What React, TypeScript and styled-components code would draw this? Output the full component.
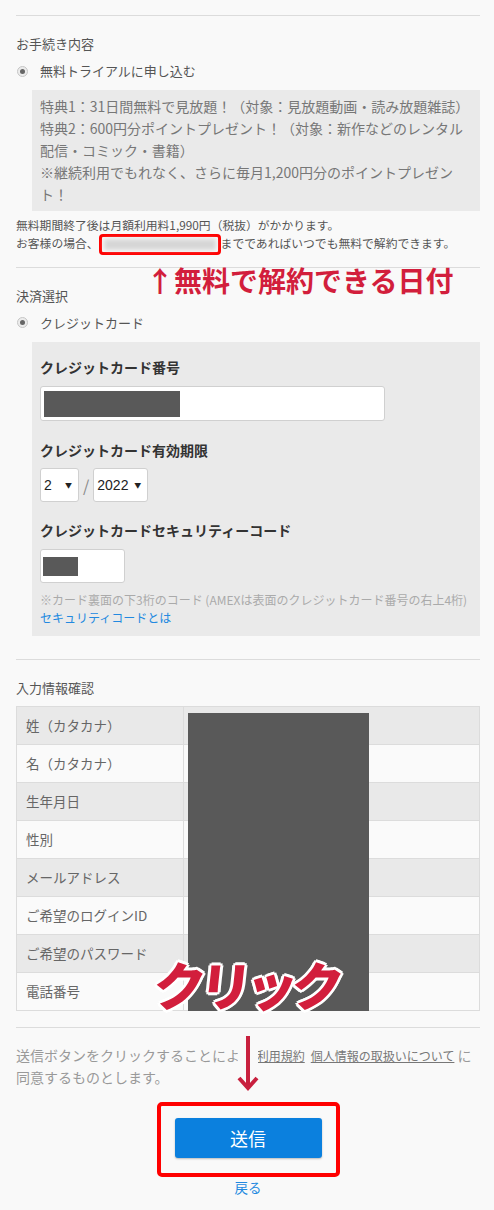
import styled, { createGlobalStyle } from "styled-components";

const GlobalStyle = createGlobalStyle`
  html, body {
    margin: 0;
    padding: 0;
    background: #f9f9f9;
  }
  body {
    font-family: "Noto Sans CJK JP", "Noto Sans", sans-serif;
    color: #555;
  }
  * {
    box-sizing: border-box;
  }
`;

const Page = styled.div`
  padding: 15px 14px 14px 16px;
`;

const Divider = styled.hr<{ $top?: number }>`
  margin: ${(p) => p.$top ?? 0}px 0 0;
  border: 0;
  border-top: 1px solid #dcdcdc;
`;

const Section = styled.section`
  padding-top: 18px;
`;

const SectionTitle = styled.h2`
  margin: 0;
  font-size: 13px;
  font-weight: 400;
  line-height: 20px;
  color: #555;
`;

const RadioRow = styled.label`
  display: flex;
  align-items: center;
  gap: 12px;
  margin-top: 7px;
  padding-left: 1px;
  font-size: 13px;
  line-height: 20px;
  color: #555;
`;

const RadioDot = styled.span`
  width: 11px;
  height: 11px;
  border-radius: 50%;
  border: 1px solid #c6c6c6;
  background: #ececec;
  display: grid;
  place-items: center;
  &::after {
    content: "";
    width: 5px;
    height: 5px;
    border-radius: 50%;
    background: #666;
  }
`;

const Panel = styled.div<{ $pad: string }>`
  margin: 9px 0 0 16px;
  background: #eaeaea;
  padding: ${(p) => p.$pad};
`;

const Benefits = styled.p`
  margin: 0;
  font-size: 14px;
  line-height: 22px;
  color: #777;
  white-space: nowrap;
`;

const Notes = styled.div`
  position: relative;
  margin-top: 5px;
  font-size: 11.8px;
  line-height: 18px;
  color: #555;
  white-space: nowrap;
`;

const DateMask = styled.span`
  display: inline-block;
  vertical-align: middle;
  width: 122px;
  height: 21px;
  margin: -3px 0 -2px;
  border: 3px solid #ff0000;
  border-radius: 4px;
  padding: 2px;
  background: #f9f9f9;
  &::after {
    content: "";
    display: block;
    height: 100%;
    background: #d6d6d6;
    filter: blur(2px);
  }
`;

const Callout = styled.div`
  position: absolute;
  left: 130px;
  top: 47px;
  font-size: 28px;
  font-weight: 700;
  line-height: 34px;
  color: #d21e3c;
  white-space: nowrap;
`;

const FieldLabel = styled.div<{ $top?: number }>`
  margin-top: ${(p) => p.$top ?? 0}px;
  font-size: 14px;
  font-weight: 700;
  line-height: 20px;
  color: #333;
`;

const Field = styled.div<{ $w: number; $h: number; $pad: string }>`
  margin-top: 9px;
  width: ${(p) => p.$w}px;
  height: ${(p) => p.$h}px;
  padding: ${(p) => p.$pad};
  background: #fff;
  border: 1px solid #d0d0d0;
  border-radius: 3px;
`;

const Redacted = styled.div<{ $w: number }>`
  width: ${(p) => p.$w}px;
  height: 100%;
  background: #595959;
`;

const ExpiryRow = styled.div`
  margin-top: 8px;
  display: flex;
  align-items: center;
  gap: 4px;
  color: #888;
  font-size: 16px;
`;

const SelectWrap = styled.div<{ $w: number }>`
  position: relative;
  width: ${(p) => p.$w}px;
  &::after {
    content: "▼";
    position: absolute;
    right: 7px;
    top: 50%;
    transform: translateY(-50%);
    font-size: 7px;
    color: #222;
    pointer-events: none;
  }
`;

const Select = styled.select`
  appearance: none;
  width: 100%;
  height: 34px;
  padding: 0 0 0 3px;
  background: #fff;
  border: 1px solid #d0d0d0;
  border-radius: 3px;
  font-family: "Liberation Sans", Arial, sans-serif;
  font-size: 14px;
  color: #222;
`;

const Hint = styled.div`
  margin-top: 8px;
  font-size: 12px;
  line-height: 18px;
  color: #aaa;
  white-space: nowrap;
`;

const BlueLink = styled.a<{ $size?: number }>`
  display: block;
  font-size: ${(p) => p.$size ?? 12}px;
  line-height: 18px;
  color: #2289e0;
  text-decoration: none;
`;

const TableWrap = styled.div`
  position: relative;
  margin-top: 8px;
`;

const InfoTable = styled.table`
  width: 100%;
  border-collapse: collapse;
  border: 1px solid #dcdcdc;
`;

const Row = styled.tr`
  height: 38px;
  background: #fafafa;
  &:nth-child(odd) {
    background: #e9e9e9;
  }
`;

const LabelCell = styled.td`
  width: 167px;
  padding: 0 0 0 9px;
  border: 1px solid #dcdcdc;
  font-size: 13.5px;
  color: #666;
`;

const ValueCell = styled.td`
  border: 1px solid #dcdcdc;
`;

const ValueMask = styled.div`
  position: absolute;
  left: 172px;
  top: 7px;
  width: 181px;
  bottom: 0;
  background: #595959;
`;

const ClickCallout = styled.div`
  position: absolute;
  left: 138px;
  top: 248px;
  font-size: 52px;
  font-weight: 900;
  line-height: 60px;
  letter-spacing: -6px;
  color: #d21e3c;
  transform: skewX(-6deg);
  text-shadow: 3px 0 #fff, -3px 0 #fff, 0 3px #fff, 0 -3px #fff, 2px 2px #fff,
    -2px -2px #fff, 2px -2px #fff, -2px 2px #fff;
  white-space: nowrap;
`;

const Terms = styled.p`
  position: relative;
  margin: 16px 0 0;
  font-size: 14px;
  line-height: 22px;
  color: #999;
  white-space: nowrap;
`;

const TermsLink = styled.a`
  margin: 0 3px;
  font-size: 12px;
  line-height: 1;
  color: #777;
  text-decoration: underline;
`;

const DownArrow = styled.svg`
  position: absolute;
  left: 219px;
  top: -10px;
`;

const SubmitFrame = styled.div`
  width: fit-content;
  margin: 14px auto 0;
  padding: 12px 14px 15px;
  border: 4px solid #ff0000;
  border-radius: 5px;
`;

const SubmitButton = styled.button`
  width: 147px;
  height: 40px;
  border: 0;
  border-radius: 3px;
  background: #0b80de;
  box-shadow: 0 1px 2px rgba(0, 0, 0, 0.25);
  color: #fff;
  font-family: inherit;
  font-size: 18px;
`;

const Back = styled(BlueLink)`
  margin-top: 1px;
  text-align: center;
`;

const rows = [
  "姓（カタカナ）",
  "名（カタカナ）",
  "生年月日",
  "性別",
  "メールアドレス",
  "ご希望のログインID",
  "ご希望のパスワード",
  "電話番号",
];

export default function App() {
  return (
    <>
      <GlobalStyle />
      <Page>
        <Divider />
        <Section>
          <SectionTitle>お手続き内容</SectionTitle>
          <RadioRow>
            <RadioDot />
            無料トライアルに申し込む
          </RadioRow>
          <Panel $pad="5px 8px 6px">
            <Benefits>
              特典1：31日間無料で見放題！（対象：見放題動画・読み放題雑誌）
              <br />
              特典2：600円分ポイントプレゼント！（対象：新作などのレンタル
              <br />
              配信・コミック・書籍）
              <br />
              ※継続利用でもれなく、さらに毎月1,200円分のポイントプレゼン
              <br />
              ト！
            </Benefits>
          </Panel>
          <Notes>
            無料期間終了後は月額利用料1,990円（税抜）がかかります。
            <br />
            お客様の場合、
            <DateMask />
            までであればいつでも無料で解約できます。
            <Callout>↑無料で解約できる日付</Callout>
          </Notes>
        </Section>

        <Divider $top={14} />
        <Section>
          <SectionTitle>決済選択</SectionTitle>
          <RadioRow>
            <RadioDot />
            クレジットカード
          </RadioRow>
          <Panel $pad="15px 8px 9px">
            <FieldLabel>クレジットカード番号</FieldLabel>
            <Field $w={345} $h={35} $pad="4px 3px 3px">
              <Redacted $w={136} />
            </Field>
            <FieldLabel $top={19}>クレジットカード有効期限</FieldLabel>
            <ExpiryRow>
              <SelectWrap $w={39}>
                <Select defaultValue="2">
                  <option value="2">2</option>
                </Select>
              </SelectWrap>
              /
              <SelectWrap $w={55}>
                <Select defaultValue="2022">
                  <option value="2022">2022</option>
                </Select>
              </SelectWrap>
            </ExpiryRow>
            <FieldLabel $top={18}>クレジットカードセキュリティーコード</FieldLabel>
            <Field $w={85} $h={34} $pad="7px 2px 6px">
              <Redacted $w={35} />
            </Field>
            <Hint>
              ※カード裏面の下3桁のコード (AMEXは表面のクレジットカード番号の右上4桁)
            </Hint>
            <BlueLink href="#">セキュリティコードとは</BlueLink>
          </Panel>
        </Section>

        <Divider $top={23} />
        <Section>
          <SectionTitle>入力情報確認</SectionTitle>
          <TableWrap>
            <InfoTable>
              <tbody>
                {rows.map((label) => (
                  <Row key={label}>
                    <LabelCell>{label}</LabelCell>
                    <ValueCell />
                  </Row>
                ))}
              </tbody>
            </InfoTable>
            <ValueMask />
            <ClickCallout>クリック</ClickCallout>
          </TableWrap>
        </Section>

        <Divider $top={16} />
        <Terms>
          送信ボタンをクリックすることにより
          <TermsLink href="#">利用規約</TermsLink>
          <TermsLink href="#">個人情報の取扱いについて</TermsLink>
          に
          <br />
          同意するものとします。
          <DownArrow width="26" height="58" viewBox="0 0 26 58">
            <rect x="3" y="9" width="20" height="20" fill="#f9f9f9" />
            <path
              d="M13 2 V52 M4 44 L13 54 L22 44"
              fill="none"
              stroke="#c8203e"
              strokeWidth="4"
              strokeLinejoin="miter"
            />
          </DownArrow>
        </Terms>
        <SubmitFrame>
          <SubmitButton>送信</SubmitButton>
        </SubmitFrame>
        <Back href="#" $size={13.5}>
          戻る
        </Back>
      </Page>
    </>
  );
}
